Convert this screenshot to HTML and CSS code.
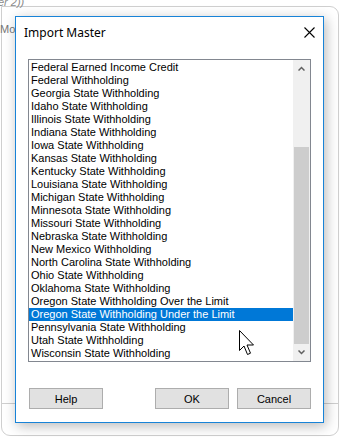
FILE: index.html
```html
<!DOCTYPE html>
<html lang="en">
<head>
    <meta charset="UTF-8">
    <meta name="viewport" content="width=device-width, initial-scale=1.0">
    <title>Import Master</title>
    <link rel="stylesheet" href="styles.css">
</head>
<body>
    <div class="page">
        <div class="code-line">er 2))</div>
        <div class="frame">
            <div class="frame-top">
                <div class="mo">Mo</div>
            </div>
            <div class="frame-bottom"></div>
        </div>

        <div class="dialog">
            <div class="titlebar">
                <span class="title">Import Master</span>
                <svg class="close" width="11" height="11" viewBox="0 0 11 11">
                    <path d="M0.5 0.5 L10.5 10.5 M10.5 0.5 L0.5 10.5" stroke="#000" stroke-width="1.1" fill="none"/>
                </svg>
            </div>
            <div class="content">
                <div class="listbox">
                    <ul class="items">
                        <li>Federal Earned Income Credit</li>
                        <li>Federal Withholding</li>
                        <li>Georgia State Withholding</li>
                        <li>Idaho State Withholding</li>
                        <li>Illinois State Withholding</li>
                        <li>Indiana State Withholding</li>
                        <li>Iowa State Withholding</li>
                        <li>Kansas State Withholding</li>
                        <li>Kentucky State Withholding</li>
                        <li>Louisiana State Withholding</li>
                        <li>Michigan State Withholding</li>
                        <li>Minnesota State Withholding</li>
                        <li>Missouri State Withholding</li>
                        <li>Nebraska State Withholding</li>
                        <li>New Mexico Withholding</li>
                        <li>North Carolina State Withholding</li>
                        <li>Ohio State Withholding</li>
                        <li>Oklahoma State Withholding</li>
                        <li>Oregon State Withholding Over the Limit</li>
                        <li class="selected">Oregon State Withholding Under the Limit</li>
                        <li>Pennsylvania State Withholding</li>
                        <li>Utah State Withholding</li>
                        <li>Wisconsin State Withholding</li>
                    </ul>
                    <div class="scrollbar">
                        <div class="arrow">
                            <svg width="7" height="5" viewBox="0 0 7 5"><path d="M0.5 4.5 L3.5 1.5 L6.5 4.5" stroke="#606060" stroke-width="1.5" fill="none"/></svg>
                        </div>
                        <div class="track">
                            <div class="thumb"></div>
                        </div>
                        <div class="arrow">
                            <svg width="7" height="5" viewBox="0 0 7 5"><path d="M0.5 0.5 L3.5 3.5 L6.5 0.5" stroke="#606060" stroke-width="1.5" fill="none"/></svg>
                        </div>
                    </div>
                </div>
                <div class="buttons">
                    <button class="help">Help</button>
                    <button>OK</button>
                    <button>Cancel</button>
                </div>
            </div>
        </div>

        <svg class="cursor" width="16" height="26" viewBox="0 0 16 26">
            <path d="M0.5 0.5 L0.5 20.5 L5 16 L8.5 24.5 L11.5 23.2 L8 15 L14.5 15 Z" fill="#fff" stroke="#000" stroke-width="1"/>
        </svg>
    </div>
</body>
</html>
```

FILE: styles.css
```css
* {
    box-sizing: border-box;
}
body {
    margin: 0;
    background-color: #ffffff;
    font-family: "Liberation Sans", Arial, sans-serif;
}
.page {
    position: relative;
    width: 342px;
    height: 437px;
    overflow: hidden;
}
.code-line {
    position: absolute;
    left: -2px;
    top: -4px;
    font-size: 11px;
    font-style: italic;
    color: #8a8a8a;
}
.frame {
    margin: 6px 3px 0 1px;
    height: 430px;
    border: 1px solid #cfcfcf;
    border-radius: 0 9px 9px 9px;
}
.frame-top {
    height: 397px;
    border-bottom: 1px solid #cfcfcf;
}
.mo {
    padding-top: 16px;
    margin-left: -2px;
    font-size: 11px;
    color: #777777;
}
.dialog {
    position: absolute;
    left: 15px;
    top: 16px;
    width: 309px;
    height: 407px;
    background-color: #ffffff;
    border: 1px solid #1883d7;
    box-shadow: 2px 3px 12px rgba(0, 0, 0, 0.28);
}
.titlebar {
    height: 30px;
    display: flex;
    align-items: center;
    justify-content: space-between;
    padding: 0 8px 0 8px;
}
.title {
    font-family: "Noto Sans", "Open Sans", sans-serif;
    font-size: 12px;
    color: #000;
}
.close {
    margin-right: 0;
    margin-top: 0;
}
.content {
    padding: 12px 12px 0 12px;
}
.listbox {
    display: flex;
    height: 303px;
    border: 1px solid #828790;
    background-color: #ffffff;
}
.items {
    flex: 1;
    list-style: none;
    margin: 0;
    padding: 1px 0;
    font-size: 11px;
    color: #000;
}
.items li {
    height: 13px;
    line-height: 13px;
    padding-left: 2px;
    white-space: nowrap;
    overflow: hidden;
}
.items li.selected {
    background-color: #0078d7;
    color: #ffffff;
}
.scrollbar {
    width: 17px;
    display: flex;
    flex-direction: column;
    background-color: #f0f0f0;
}
.arrow {
    height: 17px;
    display: flex;
    align-items: center;
    justify-content: center;
}
.track {
    flex: 1;
    display: flex;
    flex-direction: column;
    justify-content: flex-end;
}
.thumb {
    height: 197px;
    margin: 0 1px;
    background-color: #cdcdcd;
}
.buttons {
    display: flex;
    gap: 8px;
    margin-top: 26px;
}
.buttons button {
    width: 74px;
    height: 21px;
    padding: 0;
    font-family: "Liberation Sans", Arial, sans-serif;
    font-size: 11px;
    color: #000;
    background-color: #e1e1e1;
    border: 1px solid #adadad;
}
.buttons .help {
    margin-left: 1px;
    margin-right: auto;
}
.cursor {
    position: absolute;
    left: 239px;
    top: 330px;
}
```
